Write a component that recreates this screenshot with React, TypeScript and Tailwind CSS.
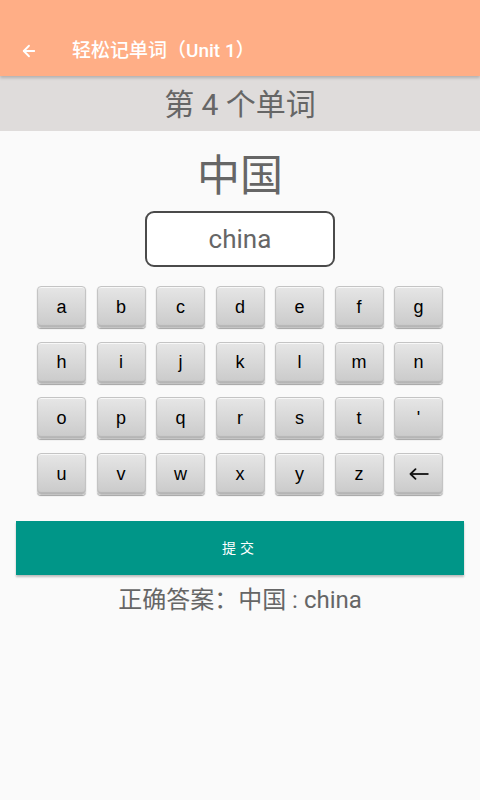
import { ArrowLeft } from "lucide-react";

const rows = [
  ["a", "b", "c", "d", "e", "f", "g"],
  ["h", "i", "j", "k", "l", "m", "n"],
  ["o", "p", "q", "r", "s", "t", "'"],
  ["u", "v", "w", "x", "y", "z", "back"],
];

const cjk = { fontFamily: "Roboto, 'Noto Sans CJK SC', sans-serif" };

function BackKey() {
  return (
    <svg width="20" height="12" viewBox="0 0 20 12" fill="none" stroke="#111" strokeWidth="1.8">
      <path d="M1.5 6H19.5" />
      <path d="M6.5 1.2L1.5 6L6.5 10.8" strokeLinecap="round" strokeLinejoin="round" />
    </svg>
  );
}

export default function App() {
  return (
    <div className="flex h-[800px] w-[480px] flex-col bg-[#fafafa]" style={cjk}>
      {/* App bar */}
      <div className="relative z-10 flex h-[76px] items-end bg-[#ffae86] pb-[16px] shadow-[0_2px_3px_rgba(0,0,0,0.2)]">
        <ArrowLeft className="ml-[20px] h-[18px] w-[18px] text-white" strokeWidth={2.4} />
        <span className="ml-[34px] text-[19px] leading-[19px] font-medium text-white">轻松记单词（Unit 1）</span>
      </div>

      {/* Word index */}
      <div className="flex h-[55px] items-center justify-center bg-[#dfdcdb] pt-[2px] text-[30px] text-[#666]">
        第 4 个单词
      </div>

      {/* Word */}
      <div className="mt-[20px] text-center text-[43px] leading-[50px] text-[#666]">中国</div>

      {/* Input */}
      <div className="mt-[10px] flex justify-center">
        <div className="flex h-[56px] w-[190px] items-center justify-center rounded-[9px] border-2 border-[#4a4a4a] bg-white text-[26px] text-[#666]">
          china
        </div>
      </div>

      {/* Keyboard */}
      <div className="mt-[19px] flex flex-col gap-[13.7px] px-[37px]">
        {rows.map((row, i) => (
          <div key={i} className="flex gap-[10.5px]">
            {row.map((k) => (
              <div
                key={k}
                className="flex h-[42px] w-[49px] items-center justify-center rounded-[4px] border border-[#c4c4c4] bg-gradient-to-b from-[#e6e6e6] to-[#cacaca] text-[18px] text-black shadow-[0_1px_1px_rgba(0,0,0,0.35),inset_0_-2px_1px_rgba(0,0,0,0.1),inset_0_1px_0_rgba(255,255,255,0.7)]"
                style={{ fontFamily: "'Liberation Sans', Arial, sans-serif" }}
              >
                {k === "back" ? <BackKey /> : k}
              </div>
            ))}
          </div>
        ))}
      </div>

      {/* Submit */}
      <div className="mt-[26px] px-[16px]">
        <button className="flex h-[54px] w-full items-center justify-center bg-[#009688] text-[14px] tracking-[4px] text-white shadow-[0_2px_2px_rgba(0,0,0,0.25)]">
          提交
        </button>
      </div>

      {/* Answer */}
      <div className="mt-[7px] text-center text-[24px] text-[#666]">正确答案：中国 : china</div>
    </div>
  );
}
